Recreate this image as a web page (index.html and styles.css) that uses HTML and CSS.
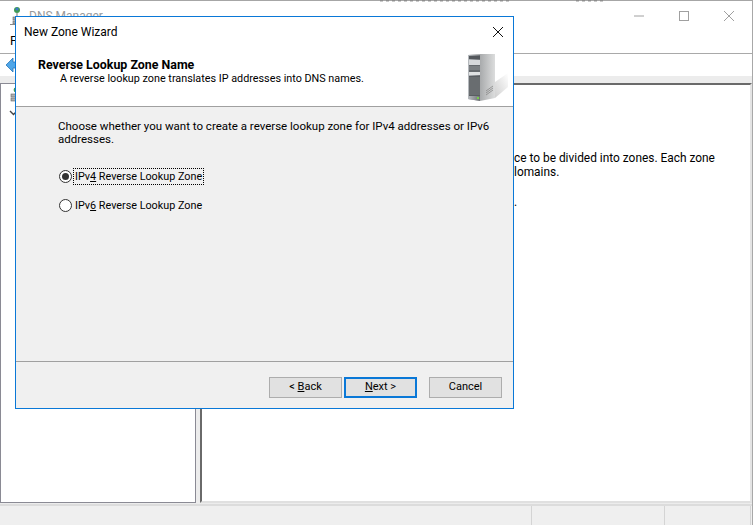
FILE: index.html
```html
<!DOCTYPE html>
<html lang="en">
<head>
<meta charset="utf-8">
<title>New Zone Wizard</title>
<link rel="stylesheet" href="styles.css">
</head>
<body>
<div class="desktop">
  <div class="mainwin">
    <div class="titlebar">
      <svg class="appicon" width="16" height="22" viewBox="0 0 16 22"><circle cx="8" cy="4" r="3" fill="#3f9a55"/><circle cx="8" cy="3" r="1.5" fill="#3b78c9"/><rect x="7.5" y="7" width="1" height="4" fill="#777"/><rect x="4" y="11" width="8" height="3" fill="#a8a8a8" stroke="#666" stroke-width=".6"/><rect x="4" y="15" width="8" height="3" fill="#a8a8a8" stroke="#666" stroke-width=".6"/><rect x="1" y="18" width="14" height="1" fill="#888"/></svg>
      <span class="apptitle">DNS Manager</span>
      <div class="winbtns">
        <svg width="12" height="12" viewBox="0 0 12 12"><path d="M1 6h10" stroke="#a0a0a0" fill="none"/></svg>
        <svg width="12" height="12" viewBox="0 0 12 12"><rect x="1.5" y="1.5" width="9" height="9" stroke="#a0a0a0" fill="none"/></svg>
        <svg width="12" height="12" viewBox="0 0 12 12"><path d="M1 1l10 10M11 1L1 11" stroke="#a0a0a0" fill="none"/></svg>
      </div>
    </div>
    <div class="menubar"><span>File</span></div>
    <div class="toolbar">
      <svg width="14" height="16" viewBox="0 0 14 16"><path d="M8 1v4h5v6H8v4L1 8z" fill="#4fa6e8" stroke="#2a76b8" stroke-width=".8"/></svg>
    </div>
    <div class="panes">
      <div class="treepane">
        <svg class="treeicon" width="12" height="18" viewBox="0 0 12 18"><circle cx="7" cy="3" r="2.4" fill="#3f9a55"/><circle cx="7" cy="2.4" r="1.1" fill="#3b78c9"/><rect x="2" y="7" width="8" height="3" fill="#b0b0b0" stroke="#666" stroke-width=".6"/><rect x="2" y="11" width="8" height="3" fill="#b0b0b0" stroke="#666" stroke-width=".6"/></svg>
        <svg class="treechev" width="9" height="6" viewBox="0 0 9 6"><path d="M1 1l3.500 3.500L8 1" stroke="#444" stroke-width="1.4" fill="none"/></svg>
      </div>
      <div class="resultpane">
        <p class="peek peek1">ce to be divided into zones. Each zone</p>
        <p class="peek peek2">lomains.</p>
        <p class="peek peek3">.</p>
      </div>
    </div>
    <div class="statusbar"><div class="st st1"></div><div class="st st2"></div><div class="st st3"></div></div>
  </div>

  <span class="topfrag frag1"></span>
  <span class="topfrag frag2"></span>

  <div class="dialog">
    <div class="dlgtitle">
      <span>New Zone Wizard</span>
      <svg width="12" height="12" viewBox="0 0 12 12"><path d="M1 1l10 10M11 1L1 11" stroke="#111" fill="none"/></svg>
    </div>
    <div class="dlghead">
      <div class="headtext">
        <div class="headtitle">Reverse Lookup Zone Name</div>
        <div class="headsub">A reverse lookup zone translates IP addresses into DNS names.</div>
      </div>
      <svg class="server" width="42" height="50" viewBox="0 0 42 50">
        <defs>
          <linearGradient id="sf" x1="0" x2="1"><stop offset="0" stop-color="#b8bcc0"/><stop offset="1" stop-color="#6d7074"/></linearGradient>
          <linearGradient id="ss" x1="0" x2="1"><stop offset="0" stop-color="#7f8285"/><stop offset="1" stop-color="#dcdddd"/></linearGradient>
          <linearGradient id="sh" x1="0" y1="1" x2="1" y2="0"><stop offset="0" stop-color="#cfcfcf"/><stop offset="1" stop-color="#ffffff"/></linearGradient>
        </defs>
        <path d="M28 46L41 35V21L28 30z" fill="url(#sh)"/>
        <path d="M1 3l12-1h15v44l-15 3-12-2z" fill="url(#ss)"/>
        <path d="M1 3h12v46l-12-2z" fill="url(#sf)"/>
        <path d="M2 4h11v3H2z" fill="#54585c"/>
        <path d="M2 8h11v5H2z" fill="#d7d9db"/>
        <path d="M2 13h11v7H2z" fill="#666a6e"/>
        <path d="M2 15h11M2 17h11" stroke="#a3a6a9" stroke-width=".7"/>
        <path d="M2 20h11v3H2z" fill="#dfe1e2"/>
        <path d="M2 24h11v20H2z" fill="#5a5e62"/>
        <path d="M2 26h11M2 28h11M2 30h11M2 32h11M2 34h11M2 36h11M2 38h11M2 40h11M2 42h11" stroke="#8d9094" stroke-width=".6"/>
        <rect x="10" y="45" width="2" height="2" fill="#78d048"/>
        <path d="M19 43l7-5M19 41l7-5M19 39l7-5" stroke="#888" stroke-width=".8"/>
      </svg>
    </div>
    <div class="dlgbody">
      <p class="prompt">Choose whether you want to create a reverse lookup zone for IPv4 addresses or IPv6 addresses.</p>
      <div class="option">
        <span class="radio checked"></span>
        <span class="optlabel focus">IPv<u>4</u> Reverse Lookup Zone</span>
      </div>
      <div class="option">
        <span class="radio"></span>
        <span class="optlabel">IPv<u>6</u> Reverse Lookup Zone</span>
      </div>
    </div>
    <div class="dlgfoot">
      <button class="btn">&lt; <u>B</u>ack</button>
      <button class="btn primary"><u>N</u>ext &gt;</button>
      <button class="btn cancel">Cancel</button>
    </div>
  </div>
</div>
</body>
</html>
```

FILE: styles.css
```css
* { box-sizing: border-box; }
html, body { margin: 0; padding: 0; }
body {
  width: 754px;
  height: 525px;
  overflow: hidden;
  background: #fff;
  font-family: "Roboto", "Open Sans", sans-serif;
  font-size: 11.5px;
  color: #000;
}
.desktop { position: relative; width: 754px; height: 525px; overflow: hidden; }
.mainwin {
  display: flex;
  flex-direction: column;
  height: 525px;
  width: 753px;
  border-top: 1px solid #a6a6a6;
  border-right: 1px solid #a8a8a8;
  background: #fff;
}
.topfrag {
  position: absolute;
  top: 0;
  height: 2px;
  opacity: .3;
  background: repeating-linear-gradient(90deg, #555 0 3px, transparent 3px 6px);
}
.frag1 { left: 380px; width: 131px; }
.frag2 { left: 576px; width: 30px; }
.titlebar { display: flex; align-items: center; height: 29px; padding-left: 9px; flex: none; position: relative; }
.appicon { margin-top: 3px; }
.apptitle { margin-left: 4px; color: #9a9a9a; font-size: 12px; }
.winbtns { margin-left: auto; display: flex; gap: 33px; padding-right: 17px; }
.menubar { height: 24px; flex: none; border-bottom: 1px solid #a9a9a9; padding: 3px 0 0 10px; font-size: 12.5px; }
.toolbar { height: 22px; flex: none; padding: 3px 0 0 5px; }
.panes { flex: 1; display: flex; gap: 4px; min-height: 0; background: #ececec; padding-top: 7px; }
.treepane { width: 196px; border: 1px solid #8a8a94; background: #fff; padding: 3px 0 0 8px; display: flex; flex-direction: column; gap: 5px; margin-bottom: 1px; }
.resultpane { flex: 1; background: #fff; border-top: 2px solid #6a6a6a; border-left: 2px solid #6a6a6a; border-bottom: 2px solid #e0e0e0; border-right: 2px solid #e4e4e4; padding-top: 66px; margin-bottom: 1px; }
.peek { margin: 0; font-size: 11.9px; line-height: 14px; padding-left: 312px; white-space: nowrap; }
.peek3 { margin-top: 16px; }
.statusbar { height: 21px; flex: none; background: #efefef; border-top: 2px solid #dcdcdc; display: flex; }
.st { border-right: 1px solid #d4d4d4; }
.st1 { width: 532px; }
.st2 { width: 133px; }
.st3 { width: 86px; }

.dialog {
  position: absolute;
  left: 15px;
  top: 16px;
  width: 499px;
  height: 393px;
  background: #fff;
  border: 1px solid #0a78d7;
  display: flex;
  flex-direction: column;
}
.dlgtitle { height: 30px; flex: none; display: flex; align-items: center; justify-content: space-between; padding: 0 9px 0 8px; font-size: 12px; }
.dlghead { height: 60px; flex: none; display: flex; justify-content: space-between; border-bottom: 1px solid #a0a0a0; padding-left: 22px; }
.headtitle { font-weight: 700; font-size: 12.4px; line-height: 15px; padding-top: 10px; }
.headsub { padding-left: 22px; font-size: 10.8px; line-height: 14px; }
.server { margin: 5px 4px 0 0; }
.dlgbody { flex: 1; background: #f0f0f0; padding: 13px 0 0 42px; border-bottom: 1px solid #a0a0a0; }
.prompt { margin: 0 0 22px; line-height: 13px; width: 440px; }
.option { display: flex; align-items: center; height: 17px; margin-bottom: 12px; margin-left: 1px; font-size: 10.8px; }
.radio { width: 13px; height: 13px; border-radius: 50%; border: 1px solid #333; background: #fff; flex: none; position: relative; }
.radio.checked::after { content: ""; position: absolute; left: 2px; top: 2px; width: 7px; height: 7px; border-radius: 50%; background: #333; }
.optlabel { margin-left: 2px; padding: 0 1px; line-height: 15px; }
.optlabel.focus { outline: 1px dotted #000; outline-offset: 0; }
.dlgfoot { height: 46px; flex: none; background: #f0f0f0; display: flex; padding: 15px 0 0 253px; gap: 2px; align-items: flex-start; }
.btn { width: 73px; height: 21px; background: #e1e1e1; border: 1px solid #adadad; font: inherit; font-size: 11px; line-height: 15px; padding: 0 0 2px; color: #000; }
.btn.primary { border: 2px solid #0a78d7; }
.btn.cancel { margin-left: 10px; }
```
